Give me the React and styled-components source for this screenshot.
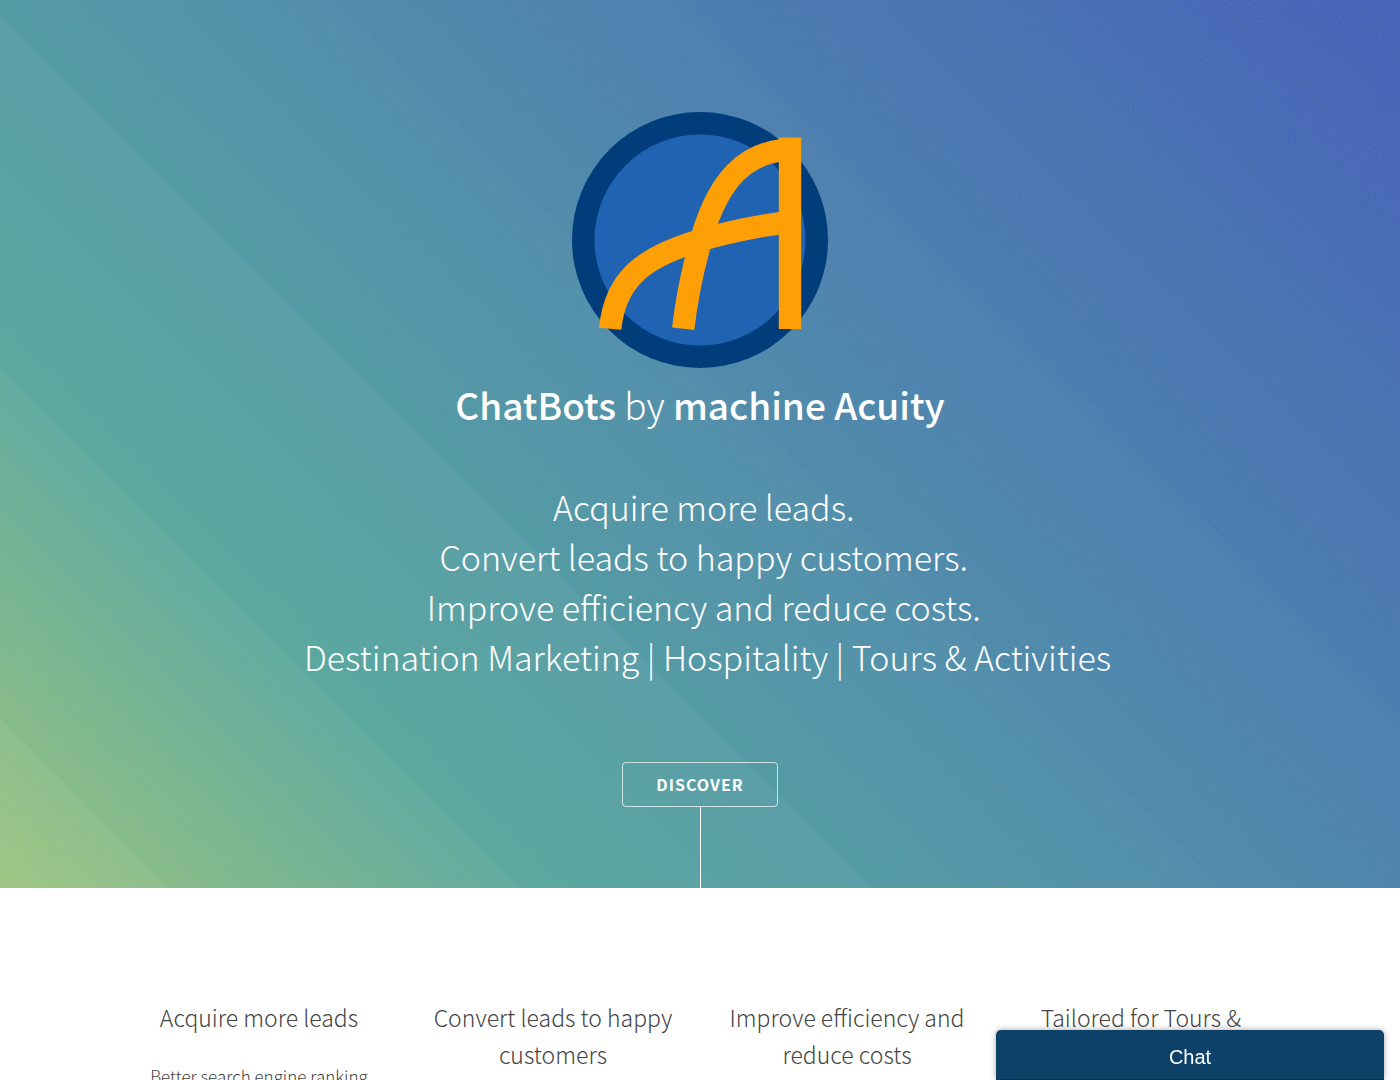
import React from "react";
import styled, { createGlobalStyle } from "styled-components";

const GlobalStyle = createGlobalStyle`
  *, *::before, *::after { box-sizing: border-box; }
  body {
    margin: 0;
    background: #fff;
    color: #444;
    font-family: "Noto Sans CJK SC", "Open Sans", sans-serif;
    font-weight: 300;
  }
`;

/* Diagonal bands: each brightens towards its upper-right edge, fainter further along. */
const bandWidth = 248;
const bandStrengths = [
  [0.12, 0.12],
  [0.08, 0.08],
  [0.05, 0.07],
  [0.03, 0.04],
  [0.02, 0.03],
  [0.01, 0.02],
  [0.01, 0.01],
];
const bands = bandStrengths
  .map(([from, to], i) => {
    const end = 120 + i * bandWidth;
    return `rgba(255, 255, 255, ${from}) ${Math.max(0, end - bandWidth)}px, rgba(255, 255, 255, ${to}) ${end}px`;
  })
  .join(", ");

const Hero = styled.header`
  position: relative;
  display: flex;
  flex-direction: column;
  align-items: center;
  padding: 112px 32px 0;
  color: #fff;
  text-align: center;
  background-attachment: scroll, scroll, fixed;
  background-image:
    linear-gradient(45deg, rgba(60, 60, 80, 0) 50%, rgba(60, 60, 80, 0.08)),
    linear-gradient(45deg, ${bands}),
    linear-gradient(45deg, #9dc66b 5%, #4fa49a 30%, #4361c2);
`;

const Grain = styled.svg`
  position: absolute;
  inset: 0;
  width: 100%;
  height: 100%;
  pointer-events: none;
`;

const Logo = styled.svg`
  position: relative;
  width: 256px;
  height: 256px;
`;

const Title = styled.h1`
  position: relative;
  margin: 6px 0 0;
  font-size: 37px;
  font-weight: 300;
  line-height: 60px;

  strong { font-weight: 500; }
`;

const Pitch = styled.p`
  position: relative;
  margin: 48px 0 0;
  font-size: 34px;
  line-height: 50px;
`;

const DiscoverLink = styled.a`
  position: relative;
  margin-top: 80px;
  padding: 0 33px;
  border: 1px solid rgba(255, 255, 255, 0.7);
  border-radius: 4px;
  color: #fff;
  font-size: 16px;
  font-weight: 700;
  line-height: 43px;
  letter-spacing: 1px;
  text-decoration: none;
  text-transform: uppercase;
`;

const Stem = styled.div`
  position: relative;
  width: 1px;
  height: 81px;
  background: #fff;
`;

const Features = styled.section`
  display: grid;
  grid-template-columns: repeat(4, 1fr);
  width: 84%;
  margin: 0 auto;
  padding: 111px 0;
  text-align: center;
`;

const Feature = styled.article`
  padding: 0 24px;
`;

const FeatureTitle = styled.h2`
  margin: 0;
  font-size: 23px;
  font-weight: 300;
  line-height: 37px;
`;

const FeatureText = styled.p`
  margin: 25px 0 0;
  font-size: 17px;
  line-height: 30px;
`;

const ChatButton = styled.button`
  position: fixed;
  right: 16px;
  bottom: 0;
  width: 388px;
  height: 50px;
  padding: 5px 0 0;
  border: 0;
  border-bottom: 1px solid #0a3454;
  border-radius: 5px 5px 0 0;
  background: #0e4168;
  box-shadow: 0 0 6px rgba(0, 0, 0, 0.35);
  color: #fff;
  font: 20px "Liberation Sans", Arial, sans-serif;
`;

const pitchLines = [
  "\u00a0Acquire more leads.",
  "\u00a0Convert leads to happy customers.",
  "\u00a0Improve efficiency and reduce costs.",
  "\u00a0\u00a0Destination Marketing | Hospitality | Tours & Activities",
];

const features = [
  { title: "Acquire more leads", text: "Better search engine ranking" },
  { title: "Convert leads to happy customers" },
  { title: "Improve efficiency and reduce costs" },
  { title: "Tailored for Tours &" },
];

export default function App() {
  return (
    <>
      <GlobalStyle />
      <Hero>
        <Grain aria-hidden="true">
          <filter id="grain">
            <feTurbulence type="fractalNoise" baseFrequency="0.6" numOctaves="2" stitchTiles="stitch" />
            <feColorMatrix values="0 0 0 0 0.2  0 0 0 0 0.3  0 0 0 0 0.4  0.4 0 0 0 -0.14" />
          </filter>
          <rect width="100%" height="100%" filter="url(#grain)" />
        </Grain>
        <Logo viewBox="0 0 256 256" role="img" aria-label="machine Acuity">
          <circle cx="128" cy="128" r="128" fill="#003d7a" />
          <circle cx="128" cy="128" r="105.5" fill="#2063b2" />
          <g fill="none" stroke="#fd9f05" strokeWidth="22.4">
            <path d="M218 25.6V217" />
            <path d="M111.2 216.8C115 184 123 147 133 115C149 68 172 43 210 38.2" />
            <path d="M38.2 216.8C43 167 72 145 126 129C152 121 181 115 210 110.8" />
          </g>
        </Logo>
        <Title>
          <strong>ChatBots</strong> by <strong>machine Acuity</strong>
        </Title>
        <Pitch>
          {pitchLines.map((line, i) => (
            <React.Fragment key={line}>
              {i > 0 && <br />}
              {line}
            </React.Fragment>
          ))}
        </Pitch>
        <DiscoverLink href="#features">Discover</DiscoverLink>
        <Stem />
      </Hero>
      <Features id="features">
        {features.map(({ title, text }) => (
          <Feature key={title}>
            <FeatureTitle>{title}</FeatureTitle>
            {text && <FeatureText>{text}</FeatureText>}
          </Feature>
        ))}
      </Features>
      <ChatButton type="button">Chat</ChatButton>
    </>
  );
}
